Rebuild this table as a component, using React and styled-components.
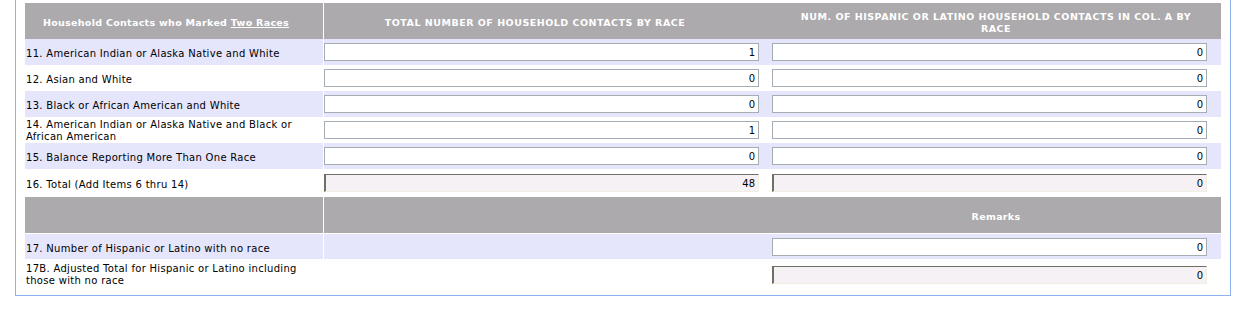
import React from "react";
import styled, { createGlobalStyle } from "styled-components";

const GlobalStyle = createGlobalStyle`
  body {
    margin: 0;
    background: #ffffff;
    font-family: "DejaVu Sans", Verdana, sans-serif;
  }
`

const Panel = styled.div`
  width: 1216px;
  margin-left: 15px;
  box-sizing: border-box;
  border: 1px solid #8db3ef;
  border-top: none;
  padding: 3px 9px 4px 9px;
  background: #ffffff;
  `

const HeadRow = styled.div`
  display: grid;
  grid-template-columns: 299px 448px 448px;
  height: 36px;
  background: #acaaad;
  border-bottom: ${props => props.$line ? "1px solid #ffffff" : "none"};
  color: #ffffff;
  font-weight: bold;
  font-size: 9.5px;
  `

const HeadCell = styled.div`
  display: flex;
  align-items: center;
  justify-content: center;
  text-align: center;
  box-sizing: border-box;
  line-height: 12px;
  letter-spacing: ${props => props.$caps ? "0.5px" : "0.3px"};
  padding: ${props => props.$pad || "3px 0 0 0"};
  border-right: ${props => props.$first ? "1px solid #ffffff" : "none"};
  `

const Under = styled.span`
  text-decoration: underline;
  `

const Row = styled.div`
  display: grid;
  grid-template-columns: 299px 448px 448px;
  align-items: center;
  height: ${props => props.$h || 26}px;
  background: ${props => props.$shade ? "#e5e5fc" : "#ffffff"};
  `

const Label = styled.div`
  height: 100%;
  display: flex;
  align-items: center;
  box-sizing: border-box;
  padding: ${props => props.$top ?? 4}px 20px 0 1px;
  border-right: 1px solid #ffffff;
  font-size: 10px;
  letter-spacing: 0.3px;
  line-height: 12px;
  color: #000000;
  `

const Cell = styled.div`
  display: flex;
  align-items: center;
  `

const NumInput = styled.input`
  width: 435px;
  height: 18px;
  box-sizing: border-box;
  margin: 0;
  padding: 1px 3px 0 0;
  text-align: right;
  font-family: "DejaVu Sans", Verdana, sans-serif;
  font-size: 10px;
  color: #000000;
  background: ${props => props.$total ? "#f5f1f4" : "#ffffff"};
  border: 1px solid #a5acb2;
  ${props => props.$total && `
    border-color: #716f64 #f1efe2 #f1efe2 #716f64;
    border-left-width: 2px;
  `}
  outline: none;
  `

const rows = [
  { label: "11. American Indian or Alaska Native and White", a: "1", b: "0" },
  { label: "12. Asian and White", a: "0", b: "0" },
  { label: "13. Black or African American and White", a: "0", b: "0" },
  { label: "14. American Indian or Alaska Native and Black or African American", a: "1", b: "0", top: 2 },
  { label: "15. Balance Reporting More Than One Race", a: "0", b: "0" },
]

function App() {
  return (
    <>
      <GlobalStyle/>
      <Panel>
        <HeadRow>
          <HeadCell $first $pad="3px 16px 0 0">
            <span>Household Contacts who Marked <Under>Two Races</Under></span>
          </HeadCell>
          <HeadCell $caps $pad="3px 26px 0 0">TOTAL NUMBER OF HOUSEHOLD CONTACTS BY RACE</HeadCell>
          <HeadCell $caps $pad="3px 20px 0 20px">NUM. OF HISPANIC OR LATINO HOUSEHOLD CONTACTS IN COL. A BY RACE</HeadCell>
        </HeadRow>
        {rows.map((r, i) => (
          <Row key={r.label} $shade={i % 2 === 0}>
            <Label $top={r.top}>{r.label}</Label>
            <Cell><NumInput readOnly value={r.a}/></Cell>
            <Cell><NumInput readOnly value={r.b}/></Cell>
          </Row>
        ))}
        <Row $h={28}>
          <Label>16. Total (Add Items 6 thru 14)</Label>
          <Cell><NumInput $total readOnly value="48"/></Cell>
          <Cell><NumInput $total readOnly value="0"/></Cell>
        </Row>
        <HeadRow $line>
          <HeadCell $first/>
          <HeadCell/>
          <HeadCell>Remarks</HeadCell>
        </HeadRow>
        <Row $shade $h={25}>
          <Label>17. Number of Hispanic or Latino with no race</Label>
          <Cell/>
          <Cell><NumInput readOnly value="0"/></Cell>
        </Row>
        <Row $h={32}>
          <Label $top={0}>17B. Adjusted Total for Hispanic or Latino including those with no race</Label>
          <Cell/>
          <Cell><NumInput $total readOnly value="0"/></Cell>
        </Row>
      </Panel>
    </>
  )
}
export default App;
